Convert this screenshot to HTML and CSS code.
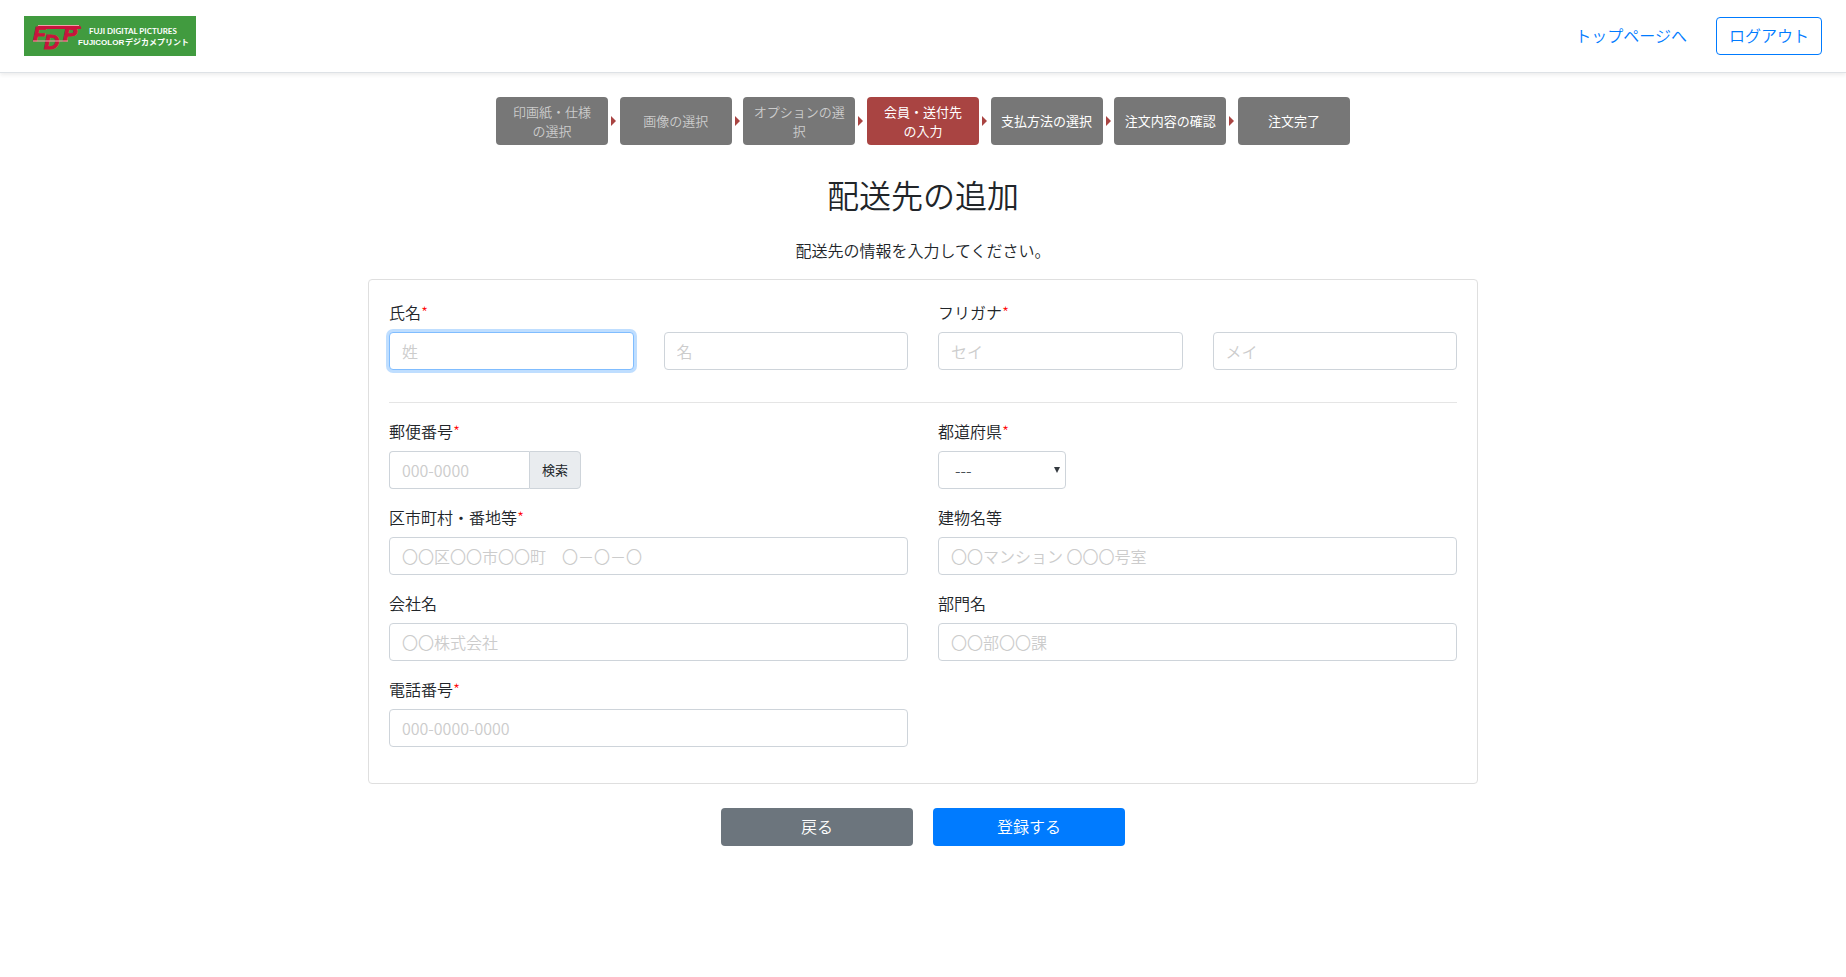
FILE: index.html
```html
<!DOCTYPE html>
<html lang="ja">
<head>
<meta charset="utf-8">
<title>配送先の追加</title>
<link rel="stylesheet" href="styles.css">
</head>
<body>
<header class="site-header">
  <svg class="logo" width="172" height="40" viewBox="0 0 172 40" role="img" aria-label="FUJICOLORデジカメプリント">
    <rect width="172" height="40" fill="#419b3f"/>
    <g class="logo-mark">
      <text x="9" y="25" font-size="21">F</text>
      <text x="20" y="33" font-size="21">D</text>
      <text x="39" y="25" font-size="21">P</text>
      <path d="M15 9h39q4 1 3 4H13z"/>
      <path class="logo-stripe" d="M14 9.500h41M9 25h35"/>
    </g>
    <text class="logo-top" x="65" y="18">FUJI DIGITAL PICTURES</text>
    <text class="logo-bottom" x="54" y="29">FUJICOLOR</text>
    <text class="logo-kana" x="101" y="29">デジカメプリント</text>
  </svg>
  <nav class="site-nav">
    <a class="nav-link" href="#">トップページへ</a>
    <button class="btn btn-outline" type="button">ログアウト</button>
  </nav>
</header>
<main class="container">
  <ol class="steps">
    <li class="step done">印画紙・仕様<br>の選択</li>
    <li class="step done">画像の選択</li>
    <li class="step done">オプションの選<br>択</li>
    <li class="step current" aria-current="step">会員・送付先<br>の入力</li>
    <li class="step">支払方法の選択</li>
    <li class="step">注文内容の確認</li>
    <li class="step">注文完了</li>
  </ol>
  <h1 class="title">配送先の追加</h1>
  <p class="lead">配送先の情報を入力してください。</p>
  <form>
    <div class="card">
      <div class="row">
        <div class="field">
          <label for="sei">氏名<span class="required">*</span></label>
          <div class="pair">
            <input class="control" id="sei" type="text" placeholder="姓" autofocus>
            <input class="control" type="text" placeholder="名" aria-label="名">
          </div>
        </div>
        <div class="field">
          <label for="sei-kana">フリガナ<span class="required">*</span></label>
          <div class="pair">
            <input class="control" id="sei-kana" type="text" placeholder="セイ">
            <input class="control" type="text" placeholder="メイ" aria-label="メイ">
          </div>
        </div>
      </div>
      <hr class="divider">
      <div class="row">
        <div class="field">
          <label for="zip">郵便番号<span class="required">*</span></label>
          <div class="zip">
            <input class="control" id="zip" type="text" placeholder="000-0000">
            <button class="zip-search" type="button">検索</button>
          </div>
        </div>
        <div class="field">
          <label for="pref">都道府県<span class="required">*</span></label>
          <div class="select">
            <select class="control" id="pref"><option>---</option></select>
          </div>
        </div>
        <div class="field">
          <label for="city">区市町村・番地等<span class="required">*</span></label>
          <input class="control" id="city" type="text" placeholder="〇〇区〇〇市〇〇町　〇－〇－〇">
        </div>
        <div class="field">
          <label for="building">建物名等</label>
          <input class="control" id="building" type="text" placeholder="〇〇マンション 〇〇〇号室">
        </div>
        <div class="field">
          <label for="company">会社名</label>
          <input class="control" id="company" type="text" placeholder="〇〇株式会社">
        </div>
        <div class="field">
          <label for="dept">部門名</label>
          <input class="control" id="dept" type="text" placeholder="〇〇部〇〇課">
        </div>
        <div class="field">
          <label for="tel">電話番号<span class="required">*</span></label>
          <input class="control" id="tel" type="tel" placeholder="000-0000-0000">
        </div>
      </div>
    </div>
    <div class="actions">
      <button class="btn btn-secondary" type="button">戻る</button>
      <button class="btn btn-primary" type="submit">登録する</button>
    </div>
  </form>
</main>
</body>
</html>
```
FILE: styles.css
```css
*, *::before, *::after { box-sizing: border-box; }

body {
  margin: 0;
  background: #fff;
  color: #212529;
  font-family: "Noto Sans CJK JP", sans-serif;
  font-size: 16px;
  font-weight: 350;
  line-height: 24px;
}

input, select, button { font: inherit; }

/* Header */
.site-header {
  display: flex;
  align-items: center;
  justify-content: space-between;
  padding: 16px 24px;
  border-bottom: 1px solid #dee2e6;
  box-shadow: 0 2px 4px rgba(0, 0, 0, 0.075);
}
.logo { display: block; }
.logo-mark { fill: #c8143c; font-family: "Liberation Sans", sans-serif; font-weight: 700; font-style: italic; }
.logo-mark text { stroke: #c8143c; stroke-width: 1px; }
.logo-stripe { fill: none; stroke: #f0a0a8; }
.logo-top { fill: #fff; font-family: Lato, sans-serif; font-size: 8px; font-weight: 700; }
.logo-bottom { fill: #fff; font-family: "Liberation Sans", sans-serif; font-size: 8px; font-weight: 700; }
.logo-kana { fill: #fff; font-size: 8px; font-weight: 700; }
.site-nav { display: flex; align-items: center; gap: 29px; }
.nav-link { padding-bottom: 2px; color: #007bff; text-decoration: none; }

/* Buttons */
.btn {
  height: 38px;
  padding: 0 12px 2px;
  border: 1px solid transparent;
  border-radius: 4px;
  color: #fff;
  cursor: pointer;
}
.btn-outline { border-color: #007bff; background: #fff; color: #007bff; }
.btn-primary { background: #007bff; }
.btn-secondary { background: #6c757d; }

.container { max-width: 1110px; margin: 0 auto; padding: 24px 0; }

/* Order steps */
.steps {
  display: flex;
  justify-content: space-between;
  max-width: 854px;
  margin: 0 auto;
  padding: 0;
  list-style: none;
}
.step {
  position: relative;
  display: flex;
  align-items: center;
  justify-content: center;
  width: 112px;
  height: 48px;
  padding-bottom: 1px;
  border-radius: 4px;
  background: #777;
  color: #fff;
  font-size: 13px;
  font-weight: 400;
  line-height: 19px;
  text-align: center;
  white-space: nowrap;
}
.step.done { color: #ccc; font-weight: 350; }
.step.current { background: #a94442; }
.step:not(:last-child)::after {
  content: "";
  position: absolute;
  top: 19px;
  right: -8px;
  border: 5px solid transparent;
  border-left-color: #a94442;
  border-right-width: 0;
}

.title { margin: 30px 0 25px; font-size: 32px; font-weight: 350; line-height: 38px; text-align: center; }
.lead { margin: 0 0 17px; text-align: center; }

/* Address form */
.card { padding: 20px; border: 1px solid #dfdfdf; border-radius: 4px; }
.row { display: grid; grid-template-columns: 1fr 1fr; column-gap: 30px; }
.field { margin-bottom: 16px; }
.field label { display: block; margin-bottom: 8px; }
.required { color: #f00; font-weight: 300; }
.pair { display: grid; grid-template-columns: 1fr 1fr; gap: 30px; }
.divider { margin: 16px 0; border: 0; border-top: 1px solid #e5e5e5; }
.control {
  display: block;
  width: 100%;
  height: 38px;
  padding: 6px 12px;
  border: 1px solid #ced4da;
  border-radius: 4px;
  background: #fff;
  color: #495057;
}
.control::placeholder { color: #ccc; opacity: 1; }
.control:focus {
  border-color: #80bdff;
  outline: 0;
  box-shadow: 0 0 0 3px rgba(0, 123, 255, 0.25);
}
.zip { display: flex; width: 192px; }
.zip .control { flex: 1; min-width: 0; border-right: 0; border-radius: 4px 0 0 4px; }
.zip-search {
  width: 52px;
  padding: 0;
  border: 1px solid #ced4da;
  border-radius: 0 4px 4px 0;
  background: #e9ecef;
  color: #212529;
  font-size: 13px;
  font-weight: 400;
  cursor: pointer;
}
.select { position: relative; width: 128px; }
.select .control { padding-left: 16px; appearance: none; }
.select::after {
  content: "";
  position: absolute;
  top: 16px;
  right: 6px;
  border: 3px solid transparent;
  border-top: 6px solid #343a40;
  border-bottom-width: 0;
  pointer-events: none;
}

.actions { display: flex; justify-content: center; gap: 20px; margin-top: 24px; }
.actions .btn { width: 192px; }
```
